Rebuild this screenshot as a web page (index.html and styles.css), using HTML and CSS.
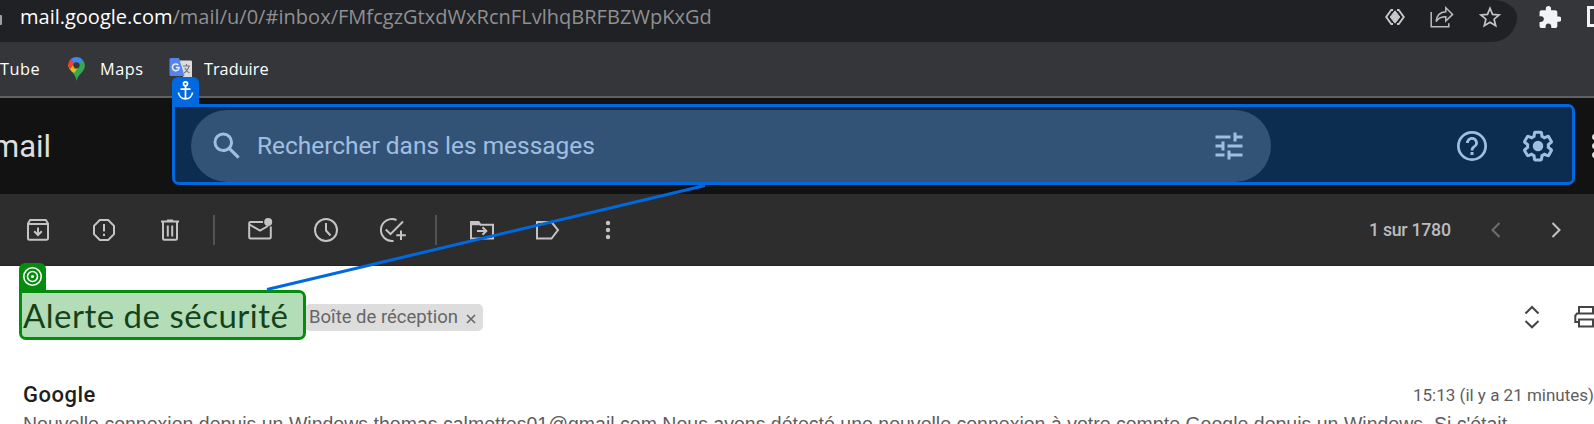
FILE: index.html
```html
<!DOCTYPE html>
<html lang="fr">
<head>
<meta charset="utf-8">
<title>Alerte de sécurité</title>
<link rel="stylesheet" href="styles.css">
</head>
<body>
<div class="browser-bar">
  <div class="omnibox">
    <i class="lock"></i>
    <span class="url"><span class="host">mail.google.com</span><span class="path">/mail/u/0/#inbox/FMfcgzGtxdWxRcnFLvlhqBRFBZWpKxGd</span></span>
    <span class="omni-icons">
      <svg width="20" height="16" viewBox="0 0 20 16"><path d="M8 1H6.300L1.200 8l5.100 7H8M12 1h1.700l5.100 7-5.100 7H12" fill="none" stroke="#c8c8c8" stroke-width="1.900"/><path d="M10 1.800 14.800 8 10 14.200 5.200 8z" fill="#c8c8c8" stroke="#c8c8c8" stroke-width="1"/></svg>
      <svg width="24" height="22" viewBox="0 0 24 22" fill="none" stroke="#bdbdbd" stroke-width="1.500"><path d="M1.200 6v14.800h17.600v-3.600"/><path d="M15.800 1.800 22.600 8.400 15.800 15v-4.200c-4.500 0-7.300 1-9.700 4.700.6-5.800 3.600-9.500 9.700-9.700z"/></svg>
      <svg width="22" height="22" viewBox="0 0 22 22" fill="none" stroke="#c4c4c4" stroke-width="1.700"><path d="m11 2.300 2.500 6.100 6.600.5-5 4.300 1.600 6.500-5.700-3.500-5.700 3.500 1.600-6.500-5-4.300 6.600-.5z"/></svg>
    </span>
  </div>
  <svg class="puzzle" width="22" height="22" viewBox="1.500 1 21 21" fill="#f1f3f4"><path d="M20.500 11H19V7c0-1.100-.9-2-2-2h-4V3.500a2.500 2.500 0 0 0-5 0V5H4c-1.100 0-1.990.9-1.990 2v3.800H3.500c1.490 0 2.700 1.210 2.700 2.700s-1.210 2.700-2.700 2.700H2V20c0 1.100.9 2 2 2h3.800v-1.500c0-1.490 1.210-2.700 2.700-2.700s2.700 1.210 2.700 2.700V22H17c1.100 0 2-.9 2-2v-4h1.500a2.500 2.500 0 0 0 0-5z"/></svg>
  <i class="panel"></i>
</div>
<div class="bookmarks">
  <span class="bm-tube">Tube</span>
  <svg class="pin" width="17" height="24" viewBox="0 0 17 24"><path d="M8.500 24C8 20.500 6.800 18 4.200 15L13 4l3.200 1.500C18 10 16 13 13.500 15.800 10.500 19 9.200 20.500 8.500 24z" fill="#34a853"/><path d="M4.200 15C1.500 12 .2 10.500.3 8l5-3.500 6 6.500z" fill="#fbbc04"/><path d="M.3 8c0-2 .7-4 2-5.300L7 6 2.300 12C1 10.400.3 9.500.3 8z" fill="#ea4335"/><path d="M2.300 2.700C5-.8 12-1 14.900 3.200L10 8.500 7 6z" fill="#4285f4"/><path d="M14.900 3.200c.6.800 1 1.600 1.300 2.500L8 15.500 5 12z" fill="#34a853"/><path d="M5 12 3.400 14 6 16l4-5z" fill="#fbbc04"/><circle cx="8.500" cy="8.300" r="3.100" fill="#35363a"/></svg>
  <span class="bm-maps">Maps</span>
  <svg class="translate" width="24" height="24" viewBox="0 0 24 24"><path d="M10 3.500h11.500c1 0 1.500.6 1.500 1.500v16.500c0 1-.5 1.500-1.500 1.500H15z" fill="#dcdcdc"/><path d="M14 9h7m-3.500-2v2m2.500 0c-.6 3-2.500 5.500-5 7m1-5c1 2.500 2.500 4 4.500 5" stroke="#777" stroke-width="1.200" fill="none"/><path d="M2 1h8l5.500 18H2C1 19 .5 18.500.5 17.500v-15C.5 1.500 1 1 2 1z" fill="#5585ec"/><path d="M9.300 8A3.400 3.400 0 1 0 10.200 10.500H7" stroke="#e8effd" stroke-width="1.500" fill="none"/></svg>
  <span class="bm-trad">Traduire</span>
</div>
<header class="header">
  <span class="logo">mail</span>
  <div class="search">
    <svg width="36" height="36" viewBox="0 0 24 24"><path d="M20.490 19l-5.730-5.730C15.530 12.200 16 10.910 16 9.500A6.500 6.500 0 1 0 9.500 16c1.410 0 2.700-.47 3.770-1.240L19 20.490 20.490 19zM5 9.500C5 7.010 7.010 5 9.500 5S14 7.010 14 9.500 11.990 14 9.500 14 5 11.990 5 9.500z"/></svg>
    <span class="placeholder">Rechercher dans les messages</span>
    <svg width="36" height="36" viewBox="0 0 24 24"><path d="M3 17v2h6v-2H3zM3 5v2h10V5H3zm10 16v-2h8v-2h-8v-2h-2v6h2zM7 9v2H3v2h4v2h2V9H7zm14 4v-2H11v2h10zm-6-4h2V7h4V5h-4V3h-2v6z"/></svg>
  </div>
  <div class="header-actions">
    <svg width="36" height="36" viewBox="0 0 24 24"><path d="M11 18h2v-2h-2v2zm1-16a10 10 0 1 0 0 20 10 10 0 0 0 0-20zm0 18.200a8.200 8.200 0 1 1 0-16.400 8.200 8.200 0 0 1 0 16.400zM12 6c-2.210 0-4 1.790-4 4h1.900c0-1.150.95-2.100 2.100-2.100s2.100.95 2.100 2.100c0 2-3 1.750-3 5h1.900c0-2.250 3-2.500 3-5 0-2.210-1.790-4-4-4z"/></svg>
    <svg width="36" height="36" viewBox="0 0 24 24"><path d="M13.850 22.250h-3.700c-.74 0-1.360-.54-1.450-1.270l-.27-1.890c-.27-.14-.53-.29-.79-.46l-1.800.72c-.7.26-1.470-.03-1.810-.65L2.200 15.530c-.35-.66-.2-1.440.36-1.880l1.530-1.190c-.01-.15-.02-.3-.02-.46 0-.15.01-.31.020-.46l-1.520-1.190c-.59-.45-.74-1.260-.37-1.880l1.850-3.190c.34-.62 1.110-.9 1.790-.63l1.810.73c.26-.17.52-.32.78-.46l.27-1.910c.09-.7.71-1.250 1.440-1.250h3.700c.74 0 1.360.54 1.450 1.270l.27 1.890c.27.14.53.29.79.46l1.800-.72c.71-.26 1.480.03 1.820.65l1.840 3.180c.36.66.2 1.440-.36 1.880l-1.520 1.190c.01.15.02.3.02.46s-.01.310-.02.46l1.520 1.190c.56.45.72 1.230.37 1.860l-1.860 3.220c-.34.62-1.110.9-1.800.63l-1.800-.72c-.26.17-.52.320-.78.46l-.27 1.910c-.1.680-.72 1.220-1.460 1.220zm-3.230-2h2.760l.37-2.550.53-.22c.44-.18.88-.44 1.340-.78l.45-.34 2.380.96 1.380-2.400-2.030-1.580.07-.56c.03-.26.06-.51.06-.78s-.03-.53-.06-.78l-.07-.56 2.030-1.580-1.390-2.400-2.390.96-.45-.35c-.42-.32-.87-.58-1.330-.77l-.52-.22-.37-2.550h-2.760l-.37 2.550-.53.210c-.44.19-.88.44-1.340.79l-.45.33-2.380-.95-1.390 2.390 2.030 1.580-.07.56a7 7 0 0 0-.06.790c0 .26.020.53.060.78l.07.560-2.030 1.580 1.380 2.400 2.390-.96.450.35c.43.330.86.580 1.330.77l.53.220z"/><circle cx="12" cy="12" r="3.500"/></svg>
    <span class="apps"><i></i><i></i><i></i></span>
  </div>
</header>
<div class="toolbar">
  <span class="btn"><svg width="30" height="30" viewBox="0 0 30 30"><path d="M5 8.500 7.200 5h15.600L25 8.500v14.800a1.500 1.500 0 0 1-1.500 1.500h-17A1.500 1.500 0 0 1 5 23.300zM5 9h20M15 12.500v7M11.200 16.300 15 20l3.800-3.700"/></svg></span>
  <span class="btn"><svg width="30" height="30" viewBox="0 0 30 30"><path d="M10.800 5h8.400L25 10.800v8.400L19.200 25h-8.400L5 19.200v-8.400zM15 9v7.500M15 18.700v2.300"/></svg></span>
  <span class="btn"><svg width="30" height="30" viewBox="0 0 30 30"><path d="M6 6.500h18M12 5.500h6M8 7v16.500a1.300 1.300 0 0 0 1.300 1.300h11.400a1.300 1.300 0 0 0 1.300-1.300V7M12.800 10.500v11M17.200 10.500v11"/></svg></span>
  <i class="divider"></i>
  <span class="btn"><svg width="30" height="30" viewBox="0 0 30 30"><path d="M18 7H5.500A1.300 1.300 0 0 0 4.200 8.300v13.900a1.300 1.300 0 0 0 1.300 1.300h19a1.300 1.300 0 0 0 1.300-1.300V11.500M4.500 9.500 15 15.700l8-4.700"/><circle cx="23.200" cy="7" r="4" class="dot"/></svg></span>
  <span class="btn"><svg width="30" height="30" viewBox="0 0 30 30"><circle cx="15" cy="15" r="11"/><path d="M15 8v7.500l4.500 5"/></svg></span>
  <span class="btn"><svg width="30" height="30" viewBox="0 0 30 30"><path d="M19.500 5A11 11 0 1 0 16.500 25.900M8.800 14.500l4.700 4.700L26 6.500M24 15.500v9.500M19.300 20.300h9.500"/></svg></span>
  <i class="divider"></i>
  <span class="btn"><svg width="30" height="30" viewBox="0 0 30 30"><path d="M4 23.500V7h7.500l2 2.800H26v13.700zM10 16h9M15.500 12.300l3.800 3.700-3.800 3.700"/><path class="dot" d="M4 6.200h7.500l2.500 4H4z"/></svg></span>
  <span class="btn"><svg width="30" height="30" viewBox="0 0 30 30"><path d="M4 7h14.500l6.500 8-6.500 8.500H4z"/></svg></span>
  <span class="btn more"><svg width="30" height="30" viewBox="0 0 30 30"><circle class="dot" cx="15" cy="8" r="2.200"/><circle class="dot" cx="15" cy="15" r="2.200"/><circle class="dot" cx="15" cy="22" r="2.200"/></svg></span>
  <span class="pager">1 sur 1780</span>
  <svg class="prev" width="10" height="16" viewBox="0 0 10 16"><path d="M8.500 1 1.500 8l7 7"/></svg>
  <svg class="next" width="10" height="16" viewBox="0 0 10 16"><path d="m1.500 1 7 7-7 7"/></svg>
</div>
<main class="mail">
  <div class="subject-row">
    <h1 class="subject">Alerte de sécurité</h1>
    <span class="chip"><span class="chip-label">Boîte de réception</span><svg width="10" height="10" viewBox="0 0 10 10"><path d="m1 1 8 8M9 1 1 9"/></svg></span>
    <svg class="expand" width="16" height="24" viewBox="0 0 16 24"><path d="m1.500 8.500L8 2l6.500 6.500M1.500 16 8 22.300 14.500 16"/></svg>
    <svg class="print" width="20" height="24" viewBox="0 0 20 24"><path d="M5 8V2h14v6M21 8.500H3L1.300 10.500v6.500H5M21 17h-2M5 14.500h14V21.500H5z"/></svg>
  </div>
  <div class="from-row"><span class="from">Google</span><span class="date">15:13 (il y a 21 minutes)</span></div>
  <p class="snippet">Nouvelle connexion depuis un Windows thomas.calmettes01@gmail.com Nous avons détecté une nouvelle connexion à votre compte Google depuis un Windows. Si c'était</p>
</main>
<div class="mark anchor-box"></div>
<div class="tag anchor-tag"><svg width="27" height="27" viewBox="0 0 27 27" fill="none" stroke="#fff" stroke-width="1.700"><circle cx="13.500" cy="6.800" r="2"/><path d="M13.500 8.800v13M8.500 12.200h10M6.500 15.500c.5 4 3.500 6.300 7 6.300s6.500-2.300 7-6.300"/></svg></div>
<div class="mark target-box"></div>
<div class="tag target-tag"><svg width="27" height="27" viewBox="0 0 27 27" fill="none" stroke="#fff" stroke-width="1.600"><circle cx="13.500" cy="13.500" r="8.700"/><circle cx="13.500" cy="13.500" r="5"/><circle cx="13.500" cy="13.500" r="1.600" fill="#fff" stroke="none"/></svg></div>
<svg class="link" width="1594" height="424" viewBox="0 0 1594 424"><path d="M267 289.500 705 185.500"/></svg>
</body>
</html>
```
FILE: styles.css
```css
* { box-sizing: border-box; }
body { margin: 0; width: 1594px; height: 424px; overflow: hidden; position: relative; background: #fff; font-family: Roboto, "Liberation Sans", sans-serif; }
svg, i { display: block; flex: none; }
span { white-space: nowrap; }

.browser-bar { display: flex; height: 42px; background: #35363a; }
.omnibox { display: flex; flex: none; width: 1517px; background: #202124; border-radius: 0 25px 25px 0; border-top-right-radius: 25px 17px; font-family: "Open Sans", sans-serif; }
.lock { width: 2px; height: 10px; margin-top: 15px; background: #9aa0a6; border-radius: 0 1px 1px 0; }
.url { margin-left: 18px; font-size: 20px; line-height: 34px; }
.host { color: #fff; }
.path { color: #8f9092; letter-spacing: .03px; }
.omni-icons { display: flex; align-items: center; height: 34px; margin-left: auto; margin-right: 16px; gap: 25px; }
.puzzle { margin: 6px 0 0 22px; }
.panel { margin: 6px 0 0 26px; width: 20px; height: 21px; border: 3px solid #f1f3f4; }

.bookmarks { display: flex; height: 56px; background: #35363a; border-bottom: 2px solid #5f6064; font: 16.300px/54px "Open Sans", sans-serif; color: #fff; }
.bm-tube { width: 39px; letter-spacing: .5px; }
.pin { margin: 15px 0 0 29px; }
.bm-maps { width: 44px; margin-left: 15px; letter-spacing: .5px; }
.translate { margin: 15px 0 0 25px; }
.bm-trad { margin-left: 11px; }

.header { display: flex; height: 96px; background: #121212; color: #e3e3e3; }
.header svg { fill: #e3e3e3; }
.logo { flex: none; width: 190px; font: 31px/98px Roboto, sans-serif; text-indent: -8px; color: #dedede; }
.search { display: flex; align-items: center; flex: none; width: 1080px; height: 72px; margin: 12px 0 0 1px; padding: 0 24px 0 18px; border-radius: 36px; background: #484848; }
.placeholder { flex: 1; margin-left: 12px; font-size: 24.450px; line-height: 34px; }
.header-actions { display: flex; align-items: center; flex: none; height: 72px; margin: 12px 0 0 183px; gap: 30px; }
.apps { display: flex; flex-direction: column; gap: 3px; margin-left: 6px; }
.apps i { width: 6px; height: 6px; border-radius: 3px; background: #e3e3e3; }

.toolbar { display: flex; align-items: center; height: 72px; padding-left: 5px; background: #2d2d2d; border-bottom: 1px solid #232323; }
.toolbar svg { fill: none; stroke: #c4c4c4; stroke-width: 2; }
.toolbar .dot { fill: #c4c4c4; stroke: none; }
.btn { width: 66px; display: flex; justify-content: center; }
.divider { width: 2px; height: 30px; margin: 0 12px 0 10px; background: #525252; }
.more { width: 54px; }
.pager { margin-left: 734px; width: 81px; font-size: 17.800px; letter-spacing: -.3px; color: #bcbcbc; font-weight: 500; }
.toolbar .prev { margin-left: 41px; stroke: #6e6e6e; }
.toolbar .next { margin-left: 50px; }

.subject-row { display: flex; height: 98px; }
.subject { flex: none; margin: 28px 0 0 23px; width: 282px; font: 400 33px/43px Lato, sans-serif; letter-spacing: .5px; color: #1f1f1f; }
.chip { display: flex; align-items: center; flex: none; width: 178px; height: 27px; margin-top: 38px; padding: 0 7px 0 4px; justify-content: space-between; border-radius: 5px; background: #ddd; color: #666; font-size: 18.500px; }
.chip-label { padding-bottom: 1px; }
.chip svg { margin-top: 3px; fill: none; stroke: #666; stroke-width: 1.600; }
.expand { margin: 39px 0 0 1041px; fill: none; stroke: #444; stroke-width: 2; }
.print { margin: 39px 0 0 34px; fill: none; stroke: #444; stroke-width: 2; }
.from-row { display: flex; justify-content: space-between; height: 50px; padding: 18px 0 0 23px; line-height: 26px; }
.from { font-size: 22px; font-weight: 500; letter-spacing: .5px; color: #1f1f1f; }
.date { font-size: 17px; color: #5e5e5e; line-height: 26px; }
.snippet { margin: 0 0 0 23px; font: 19.500px/20px "Liberation Sans", sans-serif; letter-spacing: .01px; white-space: nowrap; color: #5e5e5e; }

.mark, .tag, .link { position: absolute; }
.anchor-box { left: 172px; top: 104px; width: 1403px; height: 81px; border: 3px solid #0069e0; border-radius: 0 7px 7px 7px; background: rgba(0, 105, 224, .3); background-clip: padding-box; }
.anchor-tag { left: 172px; top: 77px; background: #0069e0; border-radius: 6px 6px 0 0; }
.target-box { left: 19px; top: 290px; width: 287px; height: 50px; border: 3px solid #048d0c; border-radius: 0 7px 7px 7px; background: rgba(4, 141, 12, .3); background-clip: padding-box; }
.target-tag { left: 19px; top: 263px; background: #048d0c; border-radius: 6px 6px 0 0; }
.link { left: 0; top: 0; fill: none; stroke: #0069e0; stroke-width: 3; }
```
